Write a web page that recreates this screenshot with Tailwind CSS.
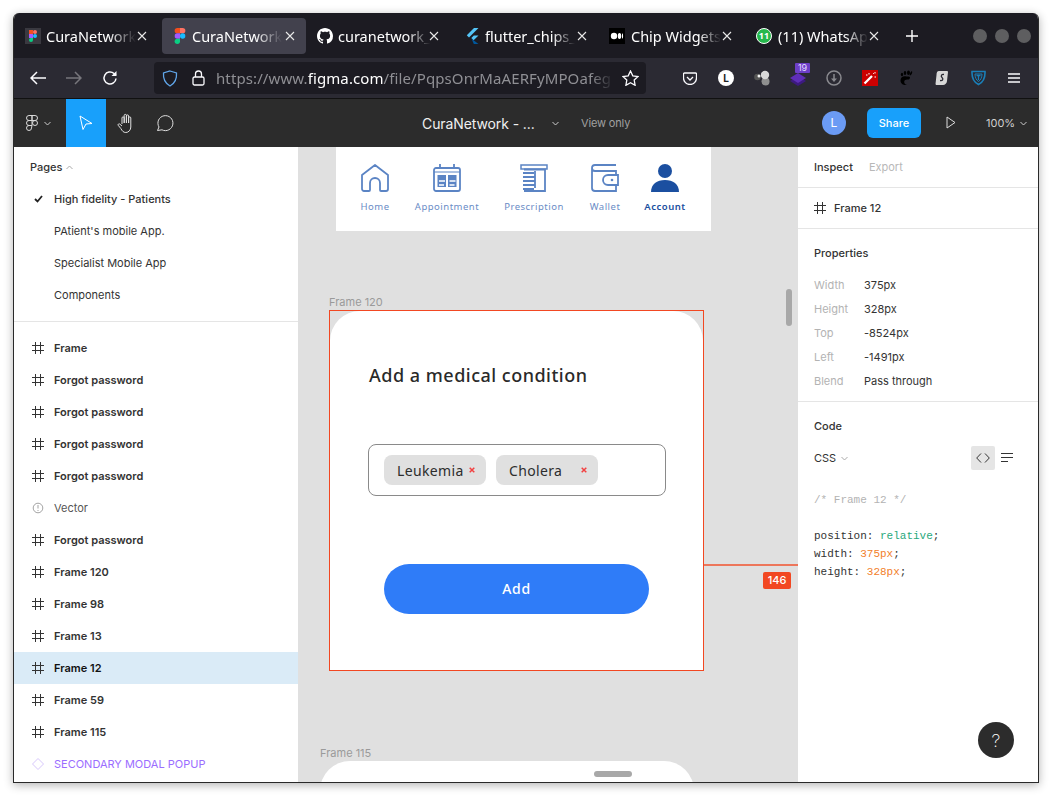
<!DOCTYPE html>
<html><head><meta charset="utf-8"><script src="https://cdn.jsdelivr.net/npm/@tailwindcss/browser@4"></script></head>
<body class="w-[1052px] h-[796px] bg-white overflow-hidden pt-[13px] pl-[13px] font-['Inter',sans-serif]">
<div class="w-[1026px] h-[770px] flex flex-col overflow-hidden rounded-t-[6px] border-x border-b border-[#2a2a2a] shadow-[0_2px_10px_rgba(0,0,0,0.3)]">

<!-- tab bar -->
<div class="h-[45px] bg-[#1c1b22] flex items-center pl-[2px] shrink-0 text-white font-['Noto_Sans',sans-serif] text-[14.5px]">
  <div class="w-[144px] h-9 mr-[2px] rounded flex items-center pl-[9px] relative">
    <span class="w-4 h-4 bg-[#3a3940] flex items-center justify-center"><svg width="8" height="12" viewBox="0 0 8 12"><rect width="4" height="4" fill="#f24e1e"/><rect x="4" width="4" height="4" rx="2" fill="#ff7262"/><rect y="4" width="4" height="4" fill="#a259ff"/><circle cx="6" cy="6" r="2" fill="#1abcfe"/><path d="M0 10a2 2 0 0 1 2-2h2v2a2 2 0 0 1-4 0" fill="#0acf83"/></svg></span>
    <span class="ml-[5px] mt-[2px] w-[90px] overflow-hidden whitespace-nowrap [mask-image:linear-gradient(to_right,black_70%,transparent)]">CuraNetwork</span>
    <svg class="absolute right-[13px]" width="10" height="10" viewBox="0 0 10 10" stroke="#e8e8e8" stroke-width="1.1"><path d="M1 1l8 8M9 1l-8 8"/></svg>
  </div>
  <div class="w-[144px] h-9 mr-[2px] rounded bg-[#42414d] flex items-center pl-[10px] relative">
    <svg width="16" height="16" viewBox="0 0 8 12" class="shrink-0"><path d="M2 0h2v4H2a2 2 0 0 1 0-4" fill="#f24e1e"/><path d="M4 0h2a2 2 0 0 1 0 4H4z" fill="#ff7262"/><path d="M2 4h2v4H2a2 2 0 0 1 0-4" fill="#a259ff"/><circle cx="6" cy="6" r="2" fill="#1abcfe"/><path d="M0 10a2 2 0 0 1 2-2h2v2a2 2 0 0 1-4 0" fill="#0acf83"/></svg>
    <span class="ml-[4px] mt-[2px] w-[90px] overflow-hidden whitespace-nowrap [mask-image:linear-gradient(to_right,black_70%,transparent)]">CuraNetwork</span>
    <svg class="absolute right-[11px]" width="10" height="10" viewBox="0 0 10 10" stroke="#e8e8e8" stroke-width="1.1"><path d="M1 1l8 8M9 1l-8 8"/></svg>
  </div>
  <div class="w-[144px] h-9 mr-[2px] rounded flex items-center pl-[9px] relative">
    <svg width="16" height="16" viewBox="0 0 16 16" fill="#fff"><path d="M8 0C3.58 0 0 3.58 0 8c0 3.54 2.29 6.53 5.47 7.59.4.07.55-.17.55-.38 0-.19-.01-.82-.01-1.49-2.01.37-2.53-.49-2.69-.94-.09-.23-.48-.94-.82-1.13-.28-.15-.68-.52-.01-.53.63-.01 1.08.58 1.23.82.72 1.21 1.87.87 2.33.66.07-.52.28-.87.51-1.07-1.78-.2-3.64-.89-3.64-3.95 0-.87.31-1.59.82-2.15-.08-.2-.36-1.02.08-2.12 0 0 .67-.21 2.2.82.64-.18 1.32-.27 2-.27s1.36.09 2 .27c1.53-1.04 2.2-.82 2.2-.82.44 1.1.16 1.92.08 2.12.51.56.82 1.27.82 2.15 0 3.07-1.87 3.75-3.65 3.95.29.25.54.73.54 1.48 0 1.07-.01 1.93-.01 2.2 0 .21.15.46.55.38A8.01 8.01 0 0 0 16 8c0-4.42-3.58-8-8-8z"/></svg>
    <span class="ml-[5px] mt-[2px] w-[92px] overflow-hidden whitespace-nowrap [mask-image:linear-gradient(to_right,black_75%,transparent)]">curanetwork_</span>
    <svg class="absolute right-[13px]" width="10" height="10" viewBox="0 0 10 10" stroke="#e8e8e8" stroke-width="1.1"><path d="M1 1l8 8M9 1l-8 8"/></svg>
  </div>
  <div class="w-[144px] h-9 mr-[2px] rounded flex items-center pl-[11px] relative">
    <svg width="14" height="16" viewBox="0 0 14 16"><path d="M9 0h4.500L4 9.500 1.800 7.300z" fill="#54c5f8"/><path d="M8.800 7.400h4.700L8.600 12.300 6.300 10z" fill="#54c5f8"/><path d="M6.300 10l2.300 2.300L13.500 16H8.800z" fill="#01579b"/></svg>
    <span class="ml-[6px] mt-[2px] w-[90px] overflow-hidden whitespace-nowrap [mask-image:linear-gradient(to_right,black_75%,transparent)]">flutter_chips_</span>
    <svg class="absolute right-[11px]" width="10" height="10" viewBox="0 0 10 10" stroke="#e8e8e8" stroke-width="1.1"><path d="M1 1l8 8M9 1l-8 8"/></svg>
  </div>
  <div class="w-[144px] h-9 mr-[2px] rounded flex items-center pl-[9px] relative">
    <svg width="16" height="16" viewBox="0 0 16 16"><rect width="16" height="16" fill="#000"/><ellipse cx="5" cy="8" rx="3.200" ry="3.200" fill="#fff"/><ellipse cx="10.500" cy="8" rx="1.700" ry="3" fill="#fff"/><ellipse cx="13.500" cy="8" rx=".6" ry="2.700" fill="#fff"/></svg>
    <span class="ml-[6px] mt-[2px] w-[90px] overflow-hidden whitespace-nowrap [mask-image:linear-gradient(to_right,black_75%,transparent)]">Chip Widgets</span>
    <svg class="absolute right-[12px]" width="10" height="10" viewBox="0 0 10 10" stroke="#e8e8e8" stroke-width="1.1"><path d="M1 1l8 8M9 1l-8 8"/></svg>
  </div>
  <div class="w-[144px] h-9 mr-[2px] rounded flex items-center pl-[10px] relative">
    <span class="relative w-4 h-4 flex items-center justify-center rounded-full bg-[#25b84c] border border-white text-[9px] font-bold leading-none">11</span>
    <span class="ml-[6px] mt-[2px] w-[90px] overflow-hidden whitespace-nowrap [mask-image:linear-gradient(to_right,black_75%,transparent)]">(11) WhatsAp</span>
    <svg class="absolute right-[11px]" width="10" height="10" viewBox="0 0 10 10" stroke="#e8e8e8" stroke-width="1.1"><path d="M1 1l8 8M9 1l-8 8"/></svg>
  </div>
  <svg class="ml-[14px]" width="12" height="12" viewBox="0 0 12 12" stroke="#fff" stroke-width="1.4"><path d="M6 0v12M0 6h12"/></svg>
  <div class="ml-auto mr-[7px] flex gap-2">
    <span class="w-[14px] h-[14px] rounded-full bg-[#5e5e60]"></span><span class="w-[14px] h-[14px] rounded-full bg-[#5e5e60]"></span><span class="w-[14px] h-[14px] rounded-full bg-[#5e5e60]"></span>
  </div>
</div>

<!-- firefox toolbar -->
<div class="h-[41px] bg-[#2b2a33] border-b border-[#111] flex items-center shrink-0">
  <svg class="ml-[16px]" width="16" height="14" viewBox="0 0 16 14" fill="none" stroke="#fbfbfe" stroke-width="1.5"><path d="M16 7H1M7 1L1 7l6 6"/></svg>
  <svg class="ml-[20px]" width="16" height="14" viewBox="0 0 16 14" fill="none" stroke="#77767c" stroke-width="1.500"><path d="M0 7h15M9 1l6 6-6 6"/></svg>
  <svg class="ml-[20px]" width="16" height="16" viewBox="0 0 16 16" fill="none" stroke="#fbfbfe" stroke-width="1.5"><path d="M14 8.500A6 6 0 1 1 12 3.500L14 5"/><path d="M14.500 1v5h-5" fill="#fbfbfe" stroke="none"/></svg>
  <div class="ml-[36px] w-[492px] h-8 bg-[#1c1b22] rounded flex items-center pl-[8px] relative">
    <svg width="16" height="17" viewBox="0 0 16 17" fill="none" stroke="#60a5e8" stroke-width="1.3"><path d="M8 1L14.500 3C15 9 12.500 13.500 8 16 3.500 13.500 1 9 1.500 3z"/></svg>
    <svg class="ml-[14px]" width="13" height="16" viewBox="0 0 13 16" fill="none" stroke="#fbfbfe" stroke-width="1.300"><rect x="1" y="7" width="11" height="8" rx="1.500"/><path d="M3.500 7V4a3 3 0 0 1 6 0v3"/></svg>
    <span class="ml-[11px] w-[398px] overflow-hidden whitespace-nowrap text-[15px] text-[#8f8f94] font-['Noto_Sans',sans-serif] tracking-[0.1px] [mask-image:linear-gradient(to_right,black_94%,transparent)]">https://www.<span class="text-white">figma.com</span>/file/PqpsOnrMaAERFyMPOafeg</span>
    <svg class="absolute right-[7px]" width="17" height="16" viewBox="0 0 17 16" fill="none" stroke="#fbfbfe" stroke-width="1.300"><path d="M8.500 1l2.300 4.800 5.200.7-3.800 3.600.9 5.200-4.600-2.500-4.600 2.500.9-5.200L1 6.500l5.200-.7z"/></svg>
  </div>
  <svg class="ml-[37px]" width="14" height="13" viewBox="0 0 14 13" fill="none" stroke="#fbfbfe" stroke-width="1.300"><path d="M1.500 1h11a1 1 0 0 1 1 1v4a6.500 6.500 0 0 1-13 0V2a1 1 0 0 1 1-1z"/><path d="M4 5l3 3 3-3"/></svg>
  <span class="ml-[21px] w-4 h-4 rounded-full bg-white text-[#222] text-[10px] font-bold flex items-center justify-center">L</span>
  <svg class="ml-[20px]" width="16" height="16" viewBox="0 0 16 16"><circle cx="11.500" cy="11.500" r="4" fill="#8f8f8f"/><circle cx="11" cy="5" r="4.200" fill="#d8d8d8"/><circle cx="3.500" cy="7" r="3.300" fill="#555"/><circle cx="5" cy="6" r="1.500" fill="#f5f5f5"/></svg>
  <span class="ml-[20px] relative w-4 h-4 block">
    <svg class="absolute top-[3px] left-0" width="16" height="13" viewBox="0 0 16 13"><path d="M8 3l8 5-8 5-8-5z" fill="#3d1a80"/><path d="M8 0l8 5-8 5-8-5z" fill="#5f2eb8"/></svg>
    <span class="absolute -top-[7px] left-[5px] w-[15px] h-[10px] bg-[#6d3fc7] text-[#e4dcff] text-[9px] leading-[10px] text-center rounded-[1px]">19</span>
  </span>
  <svg class="ml-[20px]" width="16" height="16" viewBox="0 0 16 16" fill="none" stroke="#8a8a8f" stroke-width="1.500"><circle cx="8" cy="8" r="7"/><path d="M8 4v6"/><path d="M5 8.500h6L8 12z" fill="#8a8a8f" stroke="none"/></svg>
  <span class="ml-[20px] w-4 h-4 bg-[#c00] flex items-center justify-center"><svg width="14" height="14" viewBox="0 0 14 14" stroke="#fff" stroke-width="2.300"><path d="M1.500 12.500l7.500-7.500"/><path d="M6 2v1.500M3 4h1.500M12 1v1.500M13 6h-1.500M10 2l.8.800" stroke-width="1"/></svg></span>
  <svg class="ml-[20px]" width="16" height="16" viewBox="0 0 16 16" fill="#000"><path d="M8.500 6.500C5.500 5.500 2.500 7 2.500 10.500S6 15.500 9 15c-2-.5-3-2-2.800-3.500C6.500 9.500 9 9.500 11 9.500 13 7 12 6.500 8.500 6.500z"/><ellipse cx="4" cy="4.500" rx="1.200" ry="1.700"/><ellipse cx="7" cy="3" rx="1.300" ry="1.900"/><ellipse cx="10.500" cy="2.800" rx="1.500" ry="2.200"/><path d="M14 1c.6 1.500 0 3.500-2.200 4.700C11.800 3.500 12.500 1.500 14 1z"/></svg>
  <svg class="ml-[21px]" width="14" height="16" viewBox="0 0 14 16"><path d="M4 1h8.500l.5 1-1 9c0 2-2 4-4 4H1l-.5-1 1-9C1.500 3 2 1 4 1z" fill="#d7d7d7"/><path d="M9 4.500C6.500 4 5.500 6 7 7.500s1 3.500-2 3" stroke="#2b2a33" stroke-width="1.300" fill="none"/></svg>
  <svg class="ml-[22px]" width="15" height="16" viewBox="0 0 15 16" fill="none" stroke="#1a7fb8" stroke-width="1.600"><path d="M1 1.500h13c.3 6-1.500 10.500-6.500 13C2.500 12 .7 7.500 1 1.500z"/><path d="M4 4h7c0 3-1 6-3.500 7.500C5 10 4 7 4 4z" stroke-width="1"/><path d="M5.500 5.500h4M7.500 5.500v4.500" stroke-width="1.300"/></svg>
  <svg class="ml-[22px]" width="12" height="10" viewBox="0 0 12 10" stroke="#fbfbfe" stroke-width="1.300"><path d="M0 1h12M0 5h12M0 9h12"/></svg>
</div>

<!-- figma bar -->
<div class="h-[48px] bg-[#2c2c2c] flex items-center shrink-0 text-white relative">
  <svg class="ml-[12px]" width="12" height="16" viewBox="0 0 12 16" fill="none" stroke="#d8d8d8" stroke-width="1"><path d="M6 .5H3a2.500 2.500 0 0 0 0 5h3zM6 .5h3a2.500 2.500 0 0 1 0 5H6zM6 5.500H3a2.500 2.500 0 0 0 0 5h3z"/><circle cx="9" cy="8" r="2.500"/><path d="M6 10.500H3A2.500 2.500 0 1 0 5.500 13L6 10.500z"/></svg>
  <svg class="ml-[6px]" width="7" height="5" viewBox="0 0 7 5" fill="none" stroke="#ccc"><path d="M.5 1l3 3 3-3"/></svg>
  <div class="ml-[15px] w-10 h-12 bg-[#18a0fb] flex items-center justify-center"><svg width="14" height="16" viewBox="0 0 14 16" fill="none" stroke="#fff" stroke-width="1"><path d="M1 1l12 7.500-6 .5L4 14.500z"/></svg></div>
  <svg class="ml-[11px]" width="20" height="21" viewBox="0 0 20 21" fill="none" stroke="#e0e0e0" stroke-width="1"><path d="M5 11V5a1.100 1.100 0 0 1 2.200 0V10M7.200 10V2.500a1.100 1.100 0 0 1 2.200 0V10M9.400 10V3a1.100 1.100 0 0 1 2.200 0v7M11.600 10V5a1.100 1.100 0 0 1 2.200 0 v9c0 3-2.200 5.500-5 5.500-2.500 0-3.500-1.500-5-4L1.200 12.300c-.6-1 .8-2 1.600-1.200L5 13"/></svg>
  <svg class="ml-[19px]" width="18" height="18" viewBox="0 0 18 18" fill="none" stroke="#e0e0e0" stroke-width="1"><path d="M1.500 16.500l1.500-3.500A7.500 7.500 0 1 1 6 15.800z"/></svg>
  <span class="absolute left-[408px] top-[16px] text-[14px] tracking-[-0.1px] leading-[18px] text-[#f0f0f0]">CuraNetwork - ...</span>
  <svg class="absolute left-[538px] top-[22px]" width="7" height="5" viewBox="0 0 7 5" fill="none" stroke="#ccc"><path d="M.5 1l3 3 3-3"/></svg>
  <span class="absolute left-[567px] top-[16px] text-[11px] tracking-[-0.15px] leading-[16px] text-[#a0a0a0]">View only</span>
  <span class="absolute left-[808px] top-[12px] w-6 h-6 rounded-full bg-[#6b9bf4] text-[12px] flex items-center justify-center">L</span>
  <span class="absolute left-[853px] top-[9px] w-[54px] h-[30px] rounded-[6px] bg-[#18a0fb] text-[11px] font-medium flex items-center justify-center">Share</span>
  <svg class="absolute left-[932px] top-[17px]" width="10" height="13" viewBox="0 0 10 13" fill="none" stroke="#ddd"><path d="M1 1l8 5.500-8 5.500z"/></svg>
  <span class="absolute left-[972px] top-[16px] text-[11px] leading-[16px] text-[#d0d0d0]">100%</span>
  <svg class="absolute left-[1006px] top-[22px]" width="7" height="5" viewBox="0 0 7 5" fill="none" stroke="#ccc"><path d="M.5 1l3 3 3-3"/></svg>
</div>

<div class="flex-1 flex min-h-0 text-[11px] text-[#333]">
  <!-- left panel -->
  <div class="w-[284px] bg-white shrink-0 overflow-hidden">
    <div class="border-b border-[#e5e5e5] pb-[10px]">
      <div class="h-9 flex items-center pl-4 pt-[4px] font-medium">Pages<svg class="ml-1" width="7" height="5" viewBox="0 0 7 5" fill="none" stroke="#aaa"><path d="M.5 4l3-3 3 3"/></svg></div>
      <div class="h-8 flex items-center pl-[20px] font-medium"><svg width="9" height="8" viewBox="0 0 9 8" fill="none" stroke="#222" stroke-width="1.800"><path d="M1 4l2.500 2.500L8 1"/></svg><span class="ml-[11px]">High fidelity - Patients</span></div>
      <div class="h-8 flex items-center pl-10">PAtient's mobile App.</div>
      <div class="h-8 flex items-center pl-10">Specialist Mobile App</div>
      <div class="h-8 flex items-center pl-10">Components</div>
    </div>
    <div class="pt-[10px] font-semibold">
      <div class="h-8 flex items-center pl-[18px]"><svg width="12" height="12" viewBox="0 0 12 12" stroke="#333"><path d="M3.500 0v12M8.500 0v12M0 3.500h12M0 8.500h12"/></svg><span class="ml-[10px]">Frame</span></div>
      <div class="h-8 flex items-center pl-[18px]"><svg width="12" height="12" viewBox="0 0 12 12" stroke="#333"><path d="M3.500 0v12M8.500 0v12M0 3.500h12M0 8.500h12"/></svg><span class="ml-[10px]">Forgot password</span></div>
      <div class="h-8 flex items-center pl-[18px]"><svg width="12" height="12" viewBox="0 0 12 12" stroke="#333"><path d="M3.500 0v12M8.500 0v12M0 3.500h12M0 8.500h12"/></svg><span class="ml-[10px]">Forgot password</span></div>
      <div class="h-8 flex items-center pl-[18px]"><svg width="12" height="12" viewBox="0 0 12 12" stroke="#333"><path d="M3.500 0v12M8.500 0v12M0 3.500h12M0 8.500h12"/></svg><span class="ml-[10px]">Forgot password</span></div>
      <div class="h-8 flex items-center pl-[18px]"><svg width="12" height="12" viewBox="0 0 12 12" stroke="#333"><path d="M3.500 0v12M8.500 0v12M0 3.500h12M0 8.500h12"/></svg><span class="ml-[10px]">Forgot password</span></div>
      <div class="h-8 flex items-center pl-[18px] font-normal text-[#555]"><svg width="12" height="12" viewBox="0 0 12 12" fill="none" stroke="#999" stroke-width=".9"><circle cx="6" cy="6" r="4.800"/><path d="M6 3v3.500M6 8v1"/></svg><span class="ml-[10px]">Vector</span></div>
      <div class="h-8 flex items-center pl-[18px]"><svg width="12" height="12" viewBox="0 0 12 12" stroke="#333"><path d="M3.500 0v12M8.500 0v12M0 3.500h12M0 8.500h12"/></svg><span class="ml-[10px]">Forgot password</span></div>
      <div class="h-8 flex items-center pl-[18px]"><svg width="12" height="12" viewBox="0 0 12 12" stroke="#333"><path d="M3.500 0v12M8.500 0v12M0 3.500h12M0 8.500h12"/></svg><span class="ml-[10px]">Frame 120</span></div>
      <div class="h-8 flex items-center pl-[18px]"><svg width="12" height="12" viewBox="0 0 12 12" stroke="#333"><path d="M3.500 0v12M8.500 0v12M0 3.500h12M0 8.500h12"/></svg><span class="ml-[10px]">Frame 98</span></div>
      <div class="h-8 flex items-center pl-[18px]"><svg width="12" height="12" viewBox="0 0 12 12" stroke="#333"><path d="M3.500 0v12M8.500 0v12M0 3.500h12M0 8.500h12"/></svg><span class="ml-[10px]">Frame 13</span></div>
      <div class="h-8 flex items-center pl-[18px] bg-[#daebf7] text-[#111]"><svg width="12" height="12" viewBox="0 0 12 12" stroke="#333"><path d="M3.500 0v12M8.500 0v12M0 3.500h12M0 8.500h12"/></svg><span class="ml-[10px]">Frame 12</span></div>
      <div class="h-8 flex items-center pl-[18px]"><svg width="12" height="12" viewBox="0 0 12 12" stroke="#333"><path d="M3.500 0v12M8.500 0v12M0 3.500h12M0 8.500h12"/></svg><span class="ml-[10px]">Frame 59</span></div>
      <div class="h-8 flex items-center pl-[18px]"><svg width="12" height="12" viewBox="0 0 12 12" stroke="#333"><path d="M3.500 0v12M8.500 0v12M0 3.500h12M0 8.500h12"/></svg><span class="ml-[10px]">Frame 115</span></div>
      <div class="h-8 flex items-center pl-[18px] font-normal text-[#9b6dff]"><svg width="12" height="12" viewBox="0 0 12 12" fill="none" stroke="#d6c6fb"><path d="M6 .5L11.500 6 6 11.500.5 6z"/></svg><span class="ml-[10px]">SECONDARY MODAL POPUP</span></div>
    </div>
  </div>

  <!-- canvas -->
  <div class="w-[500px] bg-[#e0e0e0] shrink-0 relative overflow-hidden font-['Noto_Sans',sans-serif]">
    <div class="absolute left-[38px] top-0 w-[375px] h-[84px] bg-white pl-4 pt-[17px] flex text-[9.5px] tracking-[0.5px] text-[#6a8cc6]">
      <div class="w-[46px] flex flex-col items-center gap-2"><svg width="28" height="28" viewBox="0 0 28 28" fill="none" stroke="#5b84c4" stroke-width="1.800"><path d="M1 11L14 1l13 10v14a2 2 0 0 1-2 2h-5a1 1 0 0 1-1-1v-7a5 5 0 0 0-10 0v7a1 1 0 0 1-1 1H3a2 2 0 0 1-2-2z" stroke-linejoin="round"/></svg><span>Home</span></div>
      <div class="w-[98px] flex flex-col items-center gap-2"><svg width="28" height="28" viewBox="0 0 28 28" fill="none" stroke="#5b84c4" stroke-width="1.800"><rect x="1" y="4" width="26" height="23" rx="2"/><path d="M7 0v4M21 0v4"/><path d="M1 8h26" stroke-width="1"/><rect x="4.500" y="11" width="8.500" height="12" fill="#5b84c4" stroke="none"/><rect x="15" y="11" width="8.500" height="12" fill="#5b84c4" stroke="none"/><path d="M6 17h6M16.500 17h6M6 21h5M16.500 21h5" stroke="#fff" stroke-width="1.300"/></svg><span>Appointment</span></div>
      <div class="w-[76px] flex flex-col items-center gap-2"><svg width="28" height="28" viewBox="0 0 28 28" fill="none" stroke="#5b84c4" stroke-width="1.800"><rect x="1" y="1" width="26" height="4" stroke-width="1.500"/><path d="M4 5.500h21V27H4M3 9h11M3 13h12M3 17h12M3 21h12M3 25h11" /><path d="M15 7v17"/></svg><span>Prescription</span></div>
      <div class="w-[66px] flex flex-col items-center gap-2"><svg width="28" height="28" viewBox="0 0 28 28" fill="none" stroke="#5b84c4" stroke-width="1.800"><path d="M25 1H4a3 3 0 0 0-3 3v20a3 3 0 0 0 3 3h21v-6M1 4a3 3 0 0 0 3 3h21v4"/><path d="M27 11H17a5 5 0 0 0 0 10h10z"/><circle cx="21" cy="16" r="1.300" fill="#5b84c4" stroke="none"/></svg><span>Wallet</span></div>
      <div class="w-[54px] flex flex-col items-center gap-2 text-[#1b4fa0] font-semibold"><svg width="28" height="28" viewBox="0 0 28 28" fill="#1b4fa0"><circle cx="14" cy="7" r="7"/><path d="M0 28c0-8 6-12 14-12s14 4 14 12z"/></svg><span>Account</span></div>
    </div>

    <span class="absolute left-[31px] top-[148px] text-[11px] leading-[14px] text-[#9a9a9a] font-['Inter',sans-serif]">Frame 120</span>
    <div class="absolute left-[31px] top-[163px] w-[375px] h-[361px] border border-[#f24822] bg-[#e0e0e0]">
      <div class="h-full bg-white rounded-t-[30px] pt-[52px] pl-[39px] relative">
        <div class="text-[18px] leading-6 font-medium tracking-[0.5px] text-[#2a2a2a]">Add a medical condition</div>
        <div class="mt-[57px] -ml-[1px] w-[298px] h-[52px] border border-[#8a8a8a] rounded-[8px] flex items-center gap-[10px] pl-[15px] text-[14px] tracking-[0.35px] text-[#2d2d2d]">
          <div class="w-[102px] h-[30px] rounded-[8px] bg-[#e0e0e0] pl-[13px] flex items-center relative">Leukemia<svg class="absolute right-[11px] top-[12px]" width="6" height="6" viewBox="0 0 6 6" stroke="#f24040" stroke-width="1.500"><path d="M.7.700l4.600 4.600M5.300.700L.7 5.300"/></svg></div>
          <div class="w-[102px] h-[30px] rounded-[8px] bg-[#e0e0e0] pl-[13px] flex items-center relative">Cholera<svg class="absolute right-[11px] top-[12px]" width="6" height="6" viewBox="0 0 6 6" stroke="#f24040" stroke-width="1.500"><path d="M.7.700l4.600 4.600M5.300.700L.7 5.300"/></svg></div>
        </div>
        <div class="mt-[68px] ml-[15px] w-[265px] h-[50px] pb-[2px] rounded-full bg-[#2f7cf8] flex items-center justify-center text-white text-[14px] font-medium tracking-[0.7px]">Add</div>
      </div>
    </div>
    <div class="absolute left-[406px] top-[417px] w-[94px] h-[2px] bg-[#f24822]/70"></div>
    <span class="absolute left-[465px] top-[425px] w-[28px] h-[17px] rounded-[2px] bg-[#f24822] text-white text-[11px] font-medium leading-[17px] text-center font-['Inter',sans-serif]">146</span>
    <span class="absolute left-[488px] top-[142px] w-[6px] h-[37px] rounded-full bg-[#a8a8a8]"></span>

    <span class="absolute left-[22px] top-[599px] text-[11px] leading-[14px] text-[#9a9a9a] font-['Inter',sans-serif]">Frame 115</span>
    <div class="absolute left-[22px] top-[614px] w-[374px] h-[40px] bg-white rounded-t-[30px]"></div>
    <span class="absolute left-[296px] top-[624px] w-[38px] h-[6px] rounded-full bg-[#a8a8a8]"></span>
  </div>

  <!-- right panel -->
  <div class="flex-1 bg-white relative">
    <div class="h-[41px] border-b border-[#e5e5e5] flex items-center pl-4 gap-4"><span class="font-medium">Inspect</span><span class="text-[#b8b8b8]">Export</span></div>
    <div class="h-[41px] border-b border-[#e5e5e5] flex items-center pl-4 font-medium"><svg width="12" height="12" viewBox="0 0 12 12" stroke="#333"><path d="M3.500 0v12M8.500 0v12M0 3.500h12M0 8.500h12"/></svg><span class="ml-2">Frame 12</span></div>
    <div class="border-b border-[#e5e5e5] pb-2 pl-4">
      <div class="h-11 flex items-center font-medium pt-1">Properties</div>
      <div class="h-6 flex items-center"><span class="w-[50px] text-[#b3b3b3]">Width</span>375px</div>
      <div class="h-6 flex items-center"><span class="w-[50px] text-[#b3b3b3]">Height</span>328px</div>
      <div class="h-6 flex items-center"><span class="w-[50px] text-[#b3b3b3]">Top</span>-8524px</div>
      <div class="h-6 flex items-center"><span class="w-[50px] text-[#b3b3b3]">Left</span>-1491px</div>
      <div class="h-6 flex items-center"><span class="w-[50px] text-[#b3b3b3]">Blend</span>Pass through</div>
    </div>
    <div class="pl-4">
      <div class="h-12 flex items-center font-medium">Code</div>
      <div class="h-6 flex items-center relative -mt-[4px]">CSS<svg class="ml-[5px]" width="7" height="5" viewBox="0 0 7 5" fill="none" stroke="#aaa"><path d="M.5 1l3 3 3-3"/></svg>
        <span class="absolute left-[157px] top-0 w-6 h-6 bg-[#e5e5e5] rounded-[2px] flex items-center justify-center"><svg width="14" height="10" viewBox="0 0 14 10" fill="none" stroke="#333"><path d="M5 .5L.7 5 5 9.500M9 .5L13.300 5 9 9.500"/></svg></span>
        <svg class="absolute left-[187px] top-[7px]" width="12" height="9" viewBox="0 0 12 9" stroke="#333"><path d="M0 .5h12M0 4.500h12M0 8.500h7"/></svg>
      </div>
      <div class="mt-[21px] font-['Liberation_Mono',monospace] leading-[18px]">
        <div class="text-[#b3b3b3]">/* Frame 12 */</div>
        <div class="h-[18px]"></div>
        <div>position: <span class="text-[#28a87c]">relative</span>;</div>
        <div>width: <span class="text-[#f2802a]">375px</span>;</div>
        <div>height: <span class="text-[#f2802a]">328px</span>;</div>
      </div>
    </div>
    <span class="absolute left-[180px] top-[575px] w-9 h-9 rounded-full bg-[#2c2c2c] text-white text-[18px] font-extralight flex items-center justify-center">?</span>
  </div>
</div>
</div>
</body></html>
